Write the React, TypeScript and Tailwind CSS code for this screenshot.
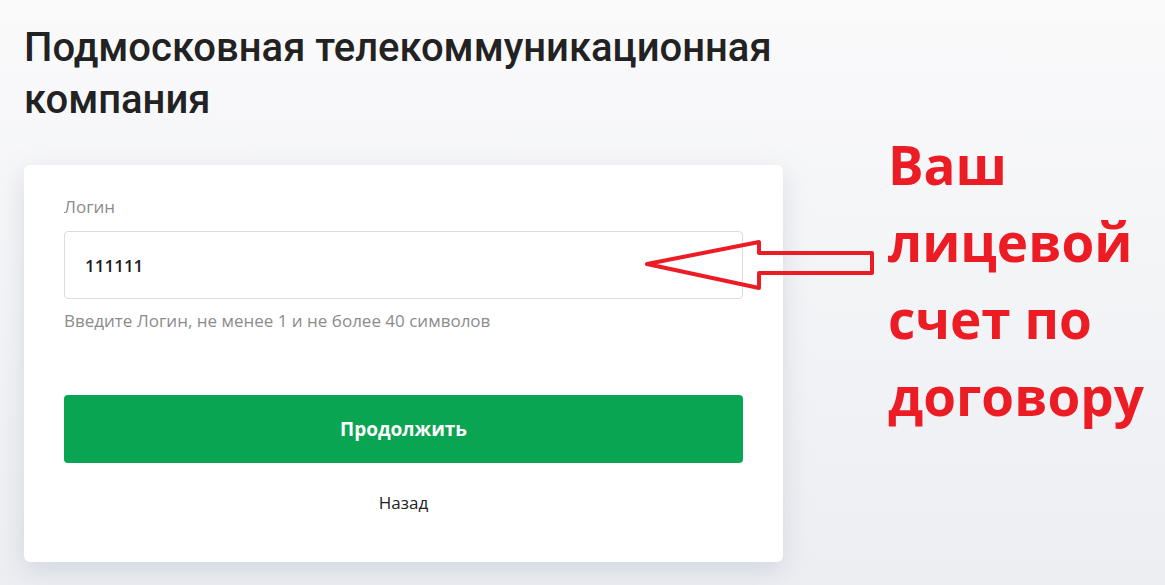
import { useState } from "react";

const Arrow = () => (
  <svg
    className="absolute left-0 top-0 pointer-events-none"
    width="1165"
    height="585"
    viewBox="0 0 1165 585"
  >
    <polygon
      points="647,264 759,242 759,253 872,253 872,273 759,273 759,288"
      fill="none"
      stroke="#ec1c24"
      strokeWidth="4"
      strokeLinejoin="round"
    />
  </svg>
);

export default function App() {
  const [login, setLogin] = useState("111111");

  return (
    <div
      className="relative w-[1165px] h-[585px] overflow-hidden bg-gradient-to-b from-[#fafafb] to-[#eceef2] px-6 pt-[22px]"
      style={{ fontFamily: '"Open Sans", sans-serif' }}
    >
      {/* Heading */}
      <h1 className="text-[#222] text-[40px] leading-[52px] font-medium w-[800px]" style={{ fontFamily: 'Roboto, sans-serif' }}>
        Подмосковная телекоммуникационная компания
      </h1>

      <div className="flex mt-[39px]">
        {/* Card */}
        <div className="shrink-0 w-[759px] h-[397px] bg-white rounded-md shadow-[0_8px_24px_rgba(160,170,185,0.35)] px-10 pt-[32px]">
          <label className="block text-[17px] text-[#8c8c8c] leading-5">Логин</label>
          <input
            value={login}
            onChange={(e) => setLogin(e.target.value)}
            className="mt-[14px] w-full h-[68px] border border-[#dcdcdc] rounded-[4px] px-5 text-[17px] font-semibold text-[#1c1c1c] outline-none"
          />
          <p className="mt-[12px] text-[17px] text-[#8c8c8c] leading-5">
            Введите Логин, не менее 1 и не более 40 символов
          </p>

          <button
            type="button"
            className="mt-[64px] w-full h-[68px] rounded-[4px] bg-[#09a552] text-white text-[19px] font-bold"
          >
            Продолжить
          </button>

          <div className="mt-[27px] text-center text-[17px] text-[#222]">Назад</div>
        </div>

        {/* Annotation */}
        <div className="ml-[105px] -mt-[39px] text-[#ec1c24] text-[53px] leading-[77px] font-bold">
          <div>Ваш</div>
          <div>лицевой</div>
          <div>счет по</div>
          <div>договору</div>
        </div>
      </div>

      <Arrow />
    </div>
  );
}
